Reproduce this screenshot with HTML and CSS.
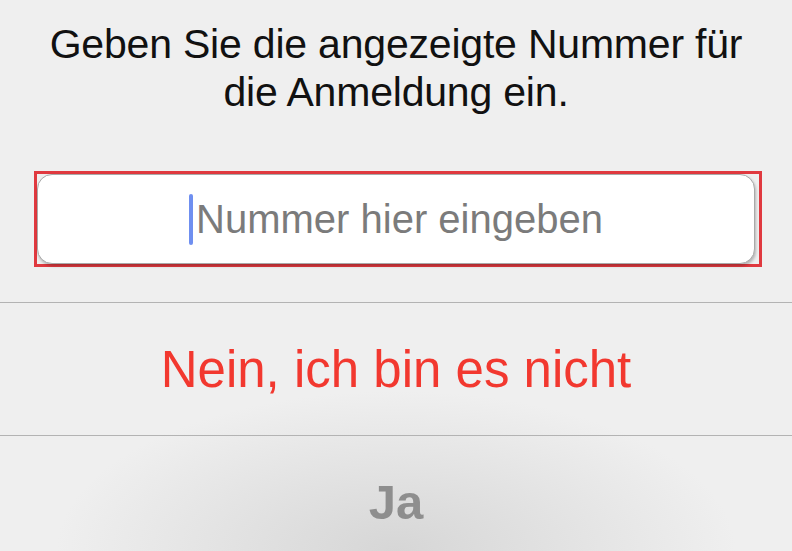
FILE: index.html
```html
<!DOCTYPE html>
<html lang="de">
<head>
    <meta charset="UTF-8">
    <meta name="viewport" content="width=device-width, initial-scale=1.0">
    <title>Anmeldung bestätigen</title>
    <link rel="stylesheet" href="styles.css">
</head>
<body>
    <div class="sheet">
        <p class="message">Geben Sie die angezeigte Nummer für die Anmeldung ein.</p>
        <div class="field-mark">
            <div class="field">
                <span class="caret"></span>
                <span class="placeholder">Nummer hier eingeben</span>
            </div>
        </div>
        <div class="actions">
            <button class="action deny">Nein, ich bin es nicht</button>
            <button class="action confirm">Ja</button>
        </div>
    </div>
</body>
</html>
```

FILE: styles.css
```css
:root {
    --bg-color: #efefef;
    --line-color: #b3b3b3;
    --red: #f2382f;
    --muted: #8e8e8e;
}
html, body {
    height: 100%;
}
body {
    margin: 0;
    font-family: 'Liberation Sans', Arial, sans-serif;
    background: radial-gradient(ellipse 340px 160px at 50% 100%, #d6d6d6, rgba(214, 214, 214, 0) 100%), var(--bg-color);
    overflow: hidden;
}
.sheet {
    display: flex;
    flex-direction: column;
}
.message {
    margin: 0;
    padding: 20px 30px 0;
    font-size: 41px;
    line-height: 48px;
    letter-spacing: -0.2px;
    text-align: center;
    color: #111;
}
.field-mark {
    margin: 55px 30px 0 34px;
    border: 3px solid #e0393f;
    padding: 0 4px 0 0;
}
.field {
    height: 88px;
    background: #fff;
    border: 1px solid #a9a9a9;
    border-radius: 15px;
    box-shadow: 1px 2px 3px rgba(0, 0, 0, 0.25);
    display: flex;
    align-items: center;
    justify-content: center;
    gap: 3px;
}
.caret {
    width: 4px;
    height: 51px;
    border-radius: 2px;
    background: #6f8ff0;
}
.placeholder {
    font-size: 40px;
    color: #7b7b7b;
}
.actions {
    margin-top: 35px;
    display: flex;
    flex-direction: column;
}
.action {
    border: none;
    border-top: 1px solid var(--line-color);
    background: none;
    font-family: inherit;
    height: 133px;
    padding: 0;
    cursor: pointer;
}
.deny {
    color: var(--red);
    font-size: 51px;
}
.confirm {
    color: var(--muted);
    font-size: 49px;
    font-weight: bold;
}
```
